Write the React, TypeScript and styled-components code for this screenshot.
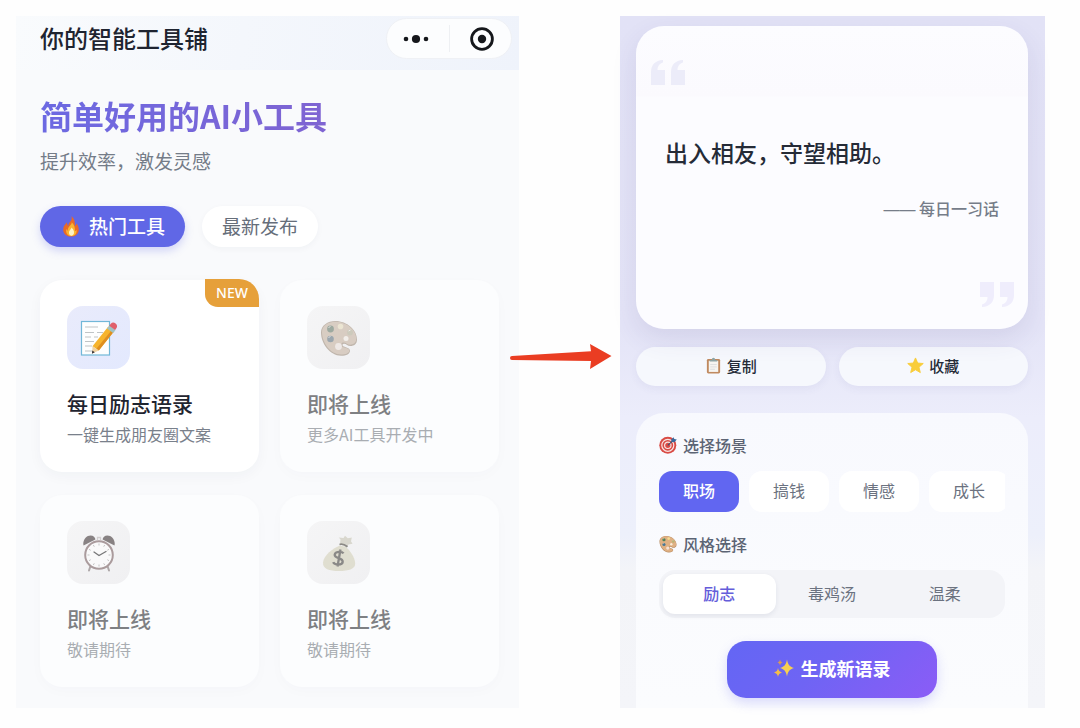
import React from 'react';
import styled, { createGlobalStyle, css } from 'styled-components';

const GlobalStyle = createGlobalStyle`
  *, *::before, *::after { box-sizing: border-box; }
  body {
    margin: 0;
    background: #fefefe;
    color: #1f2430;
    font-family: "Noto Sans CJK SC", "Noto Sans", sans-serif;
  }
  h1, h2, h3, p, blockquote { margin: 0; }
  button { font: inherit; border: 0; padding: 0; cursor: pointer; }
`;

const Page = styled.main`
  display: grid;
  grid-template-columns: minmax(0, 503fr) 101px minmax(0, 425fr);
  padding: 16px 35px 20px 16px;
`;

/* ---------- tool shop screen ---------- */

const ShopScreen = styled.section`
  background: #f9fafc;
`;

const TopBar = styled.header`
  display: flex;
  align-items: flex-start;
  justify-content: space-between;
  height: 54px;
  padding: 2px 7px 0 24px;
  background: linear-gradient(100deg, #f9fbfd 0%, #f4f7fc 45%, #eff3fb 100%);
`;

const TopTitle = styled.h2`
  font-size: 24px;
  line-height: 40px;
  font-weight: 500;
`;

const Capsule = styled.div`
  display: flex;
  align-items: center;
  width: 126px;
  height: 41px;
  border-radius: 21px;
  background: #fcfdfe;
  border: 1px solid #eff1f5;
`;

const CapsuleButton = styled.button`
  flex: 1;
  height: 27px;
  display: flex;
  align-items: center;
  justify-content: center;
  padding-right: 4px;
  background: none;

  & + & {
    padding: 0 0 0 4px;
    border-left: 1px solid #eef0f3;
  }
`;

const ShopBody = styled.div`
  padding: 25px 20px 21px 24px;
`;

const Headline = styled.h1`
  width: fit-content;
  font-size: 32px;
  line-height: 40px;
  font-weight: 700;
  color: transparent;
  background: linear-gradient(90deg, #6c69e2, #7f64d2);
  background-clip: text;
  -webkit-background-clip: text;
`;

const Tagline = styled.p`
  margin-top: 12px;
  font-size: 19px;
  line-height: 28px;
  color: #747c88;
`;

const Tabs = styled.nav`
  display: flex;
  gap: 17px;
  margin: 31px 0 33px;
`;

const Tab = styled.button<{ $active?: boolean }>`
  display: flex;
  align-items: center;
  gap: 7px;
  height: 41px;
  padding: 0 20px 2px;
  border-radius: 21px;
  font-size: 19px;
  line-height: 28px;
  ${({ $active }) =>
    $active
      ? css`
          font-weight: 500;
          color: #fff;
          background: #6067e6;
          box-shadow: 0 4px 8px rgba(96, 103, 230, 0.25);
        `
      : css`
          color: #666e7a;
          background: #fff;
          box-shadow: 0 2px 6px rgba(30, 40, 80, 0.04);
        `}
`;

const ToolGrid = styled.div`
  display: grid;
  grid-template-columns: repeat(2, minmax(0, 1fr));
  gap: 23px 21px;
`;

const ToolIcon = styled.div<{ $muted?: boolean }>`
  display: flex;
  align-items: center;
  justify-content: center;
  width: 63px;
  height: 63px;
  margin-bottom: 19px;
  border-radius: 16px;
  background: ${({ $muted }) =>
    $muted ? 'linear-gradient(135deg, #f5f5f6, #f0f0f2)' : 'linear-gradient(135deg, #e9ebfb, #e3e9fe)'};

  svg { ${({ $muted }) => $muted && 'filter: grayscale(0.6); opacity: 0.6;'} }
`;

const ToolName = styled.h3`
  font-size: 21px;
  line-height: 30px;
  font-weight: 500;
`;

const ToolNote = styled.p`
  margin-top: 4px;
  font-size: 16px;
  line-height: 24px;
  color: #79808b;
`;

const ToolCard = styled.article<{ $muted?: boolean }>`
  position: relative;
  padding: 26px 27px;
  border-radius: 22px;
  background: ${({ $muted }) => ($muted ? '#fcfdfe' : '#ffffff')};
  box-shadow: 0 4px 14px rgba(30, 40, 80, ${({ $muted }) => ($muted ? 0.02 : 0.04)});

  ${({ $muted }) =>
    $muted &&
    css`
      ${ToolName} { color: #7e8083; }
      ${ToolNote} { color: #a9adb2; }
    `}
`;

const NewBadge = styled.span`
  position: absolute;
  top: -1px;
  right: 0;
  width: 54px;
  height: 28px;
  border-radius: 0 20px 0 13px;
  background: #e6a03a;
  color: #fff;
  font-family: "Noto Sans", sans-serif;
  font-size: 14px;
  line-height: 28px;
  font-weight: 500;
  text-align: center;
`;

/* ---------- connector ---------- */

const Connector = styled.div`
  position: relative;

  svg {
    position: absolute;
    top: 326px;
    left: -12px;
    overflow: visible;
  }
`;

/* ---------- quote screen ---------- */

const QuoteScreen = styled.section`
  padding: 10px 17px 0 16px;
  background: linear-gradient(180deg, #e2e2f6 0%, #e4e4f7 45%, #ecedfb 58%, #edf0fb 75%, #f3f4f8 80%, #f4f5f9 100%);
`;

const QuoteCard = styled.blockquote`
  position: relative;
  height: 303px;
  padding: 108px 29px 0;
  border-radius: 28px;
  background: linear-gradient(180deg, #fcfcff 0, #fbfafe 70px, #fcfcff 71px);
  box-shadow: 0 10px 26px rgba(70, 65, 130, 0.11);
`;

const QuoteText = styled.p`
  font-size: 23px;
  line-height: 36px;
  font-weight: 500;
  color: #252b37;
`;

const QuoteAuthor = styled.cite`
  display: block;
  margin-top: 26px;
  font-size: 16px;
  line-height: 24px;
  font-style: normal;
  font-weight: 500;
  text-align: right;
  color: #767d89;
`;

const Dash = styled.span`
  font-family: "Liberation Sans", sans-serif;
  font-weight: 400;
`;

const QuoteMark = styled.svg<{ $closing?: boolean }>`
  position: absolute;
  ${({ $closing }) => ($closing ? 'right: 14px; bottom: 22px; transform: rotate(180deg);' : 'left: 15px; top: 34px;')}
`;

const ActionRow = styled.div`
  display: grid;
  grid-template-columns: 1fr 1fr;
  gap: 13px;
  margin: 18px 0 27px;
`;

const ActionButton = styled.button`
  display: flex;
  align-items: center;
  justify-content: center;
  gap: 5px;
  height: 39px;
  padding-bottom: 2px;
  border-radius: 20px;
  background: #f6f8fd;
  box-shadow: 0 3px 8px rgba(70, 65, 130, 0.06);
  font-size: 15px;
  font-weight: 500;
  color: #252b37;
`;

const ControlCard = styled.section`
  padding: 21px 23px 10px;
  border-radius: 28px 28px 0 0;
  background: linear-gradient(180deg, #f8f9fe, #fafbfe 60%, #fbfcfe);
`;

const SectionLabel = styled.h3`
  display: flex;
  align-items: center;
  gap: 6px;
  margin-bottom: 15px;
  font-size: 16px;
  line-height: 22px;
  font-weight: 500;
  color: #5c6474;
`;

const ChipRow = styled.div`
  display: flex;
  gap: 10px;
  margin-bottom: 21px;
  overflow: hidden;
`;

const Chip = styled.button<{ $active?: boolean }>`
  flex: 0 0 80px;
  height: 41px;
  padding-bottom: 3px;
  border-radius: 13px;
  font-size: 16px;
  font-weight: ${({ $active }) => ($active ? 500 : 400)};
  color: ${({ $active }) => ($active ? '#fff' : '#6b7280')};
  background: ${({ $active }) => ($active ? '#6166f1' : '#fff')};
`;

const Segmented = styled.div`
  display: grid;
  grid-template-columns: repeat(3, 1fr);
  height: 48px;
  padding: 4px;
  border-radius: 16px;
  background: #f3f4f8;
`;

const Segment = styled.button<{ $active?: boolean }>`
  padding-bottom: 3px;
  border-radius: 12px;
  font-size: 16px;
  color: #6b7280;
  background: none;
  ${({ $active }) =>
    $active &&
    css`
      font-weight: 500;
      color: #645dda;
      background: #fff;
      box-shadow: 0 2px 5px rgba(30, 40, 80, 0.08);
    `}
`;

const GenerateButton = styled.button`
  display: flex;
  align-items: center;
  justify-content: center;
  gap: 7px;
  width: 210px;
  height: 57px;
  margin: 23px auto 0;
  padding-bottom: 3px;
  border-radius: 19px;
  background: linear-gradient(135deg, #6366f4 0%, #6f64f4 45%, #8b5cf6 100%);
  box-shadow: 0 5px 12px rgba(99, 102, 241, 0.22);
  font-size: 18px;
  font-weight: 700;
  color: #fff;
`;

/* ---------- drawings ---------- */

type IconProps = { size: number };

const Fire = ({ size }: IconProps) => (
  <svg width={size} height={size} viewBox="0 0 24 24" aria-hidden="true">
    <path d="M12.5 1c1 3.500-.5 5-2 7C9.500 9.500 9 10.500 9 12 8 11 7.500 9.500 7.800 8 5 10.500 3.500 13 3.500 16c0 4.500 3.800 7.500 8.500 7.500s8.500-3 8.500-7.500c0-3-1.300-5.500-2.500-7-.2 1.500-.8 2.500-1.700 3C16.500 7.500 15.500 3.500 12.500 1z" fill="#ea6a26" />
    <path d="M12.800 8c.4 3-4.800 4.800-4.300 9.300-.9-.6-1.400-1.400-1.600-2.300-.9 4 1.100 8 5.100 8s6.800-2.800 6-7c-.5 1-1 1.500-1.700 1.700.4-4-1.100-7.500-3.500-9.700z" fill="#fbb52f" />
    <path d="M12.500 13.500c0 2-2.700 3-2.700 5.700 0 2 1 3.300 2.500 3.300s3.200-1.200 3-4c-.1-2-1.300-3.800-2.800-5z" fill="#fff3c4" />
  </svg>
);

const Memo = ({ size }: IconProps) => (
  <svg width={size} height={size} viewBox="0 0 38 38" aria-hidden="true">
    <rect x="1.500" y="2.500" width="28" height="33.500" fill="#fdfefe" stroke="#71b7d8" strokeWidth="1.200" />
    <path d="M5 8h13M5 13.500h9m3 0h6M5 18h6m3 0h4M5 22.500h9M5 27h7M5 32h9" stroke="#bfc4c6" strokeWidth="1" />
    <path d="M28.300 7.500l6 4.500-15.500 19.500-6.300-4.300z" fill="#f6b42d" />
    <path d="M32.200 10.400l2.100 1.600-15.500 19.500-2.400-1.700z" fill="#df8f20" />
    <path d="M12.500 27.200l6.300 4.300-6.700 3z" fill="#efd2a3" />
    <path d="M12.300 31.600l2.500 1.700-2.900 1.500z" fill="#363438" />
    <path d="M27 9.500l2.400-3 6.100 4.500-2.400 3.100z" fill="#9fc3c4" />
    <path d="M29.200 6.700l1.600-2c1.200-1.500 3.200-1.500 4.800-.3s1.900 3.100.9 4.600l-1.400 2.100z" fill="#e0606b" />
  </svg>
);

const Palette = ({ size }: IconProps) => (
  <svg width={size} height={size} viewBox="0 0 38 38" aria-hidden="true">
    <path d="M1 13.500C1 6.500 7.500 2 15.500 2 27 2 37 11 37 20.500c0 4.500-3 6.500-6.500 6.500-3 0-4-2.300-6.500-2.300-1.500 0-2 1.300-1 2.300 1.500 1.300 7 1.500 7 4.700 0 3-3.500 5-9 5C10 36.700 1 24.500 1 13.500z" fill="#b58a60" />
    <path d="M2 13C2 6.500 8 2.700 15.500 2.700 26.500 2.700 36.300 11 36.300 19.500c0 4.200-2.800 6.200-6 6.200-3 0-4-2.300-6.800-2.300-2.400 0-3 2.600-1.500 4.100 1.500 1.300 7.300 1.300 7.300 4 0 2.500-3.300 4-8.300 4C10.500 35.500 2 23.500 2 13z" fill="#dfb083" />
    <circle cx="10.500" cy="10" r="3.400" fill="#4f8058" />
    <circle cx="20.500" cy="7.500" r="2.800" fill="#f5dc8e" />
    <circle cx="30" cy="13.500" r="2.900" fill="#b9b276" />
    <circle cx="26" cy="19.500" r="2.500" fill="#f9ecd9" />
    <circle cx="10.500" cy="20" r="3.300" fill="#4a7896" />
    <circle cx="18.500" cy="27.500" r="3.400" fill="#f7e1d4" />
    <path d="M8.500 8.500l2-1M8.500 18.500l2-1M28.500 12l2-1" stroke="#fff" strokeWidth="1" opacity=".7" />
  </svg>
);

const AlarmClock = ({ size }: IconProps) => (
  <svg width={size} height={size} viewBox="0 0 38 38" aria-hidden="true">
    <path d="M10.500 32l-1.500 4.500M27.500 32l1.500 4.500" stroke="#8c7375" strokeWidth="2" strokeLinecap="round" />
    <path d="M3.500 11.500C2.300 6 6.500 1.500 10.500 1.500c3 0 4.700 2 4.900 4z" fill="#4d3436" />
    <path d="M34.500 11.500C35.700 6 31.500 1.500 27.500 1.500c-3 0-4.700 2-4.900 4z" fill="#4d3436" />
    <path d="M17.500 6V3.500h3V6" fill="none" stroke="#c4b5b6" strokeWidth="1.300" />
    <circle cx="19" cy="21" r="13.800" fill="#fff" stroke="#985a5e" strokeWidth="2" />
    <path d="M19 9.500v2M19 30.500v2M7.500 21h2M28.500 21h2M13.300 11l1 1.700M24.700 11l-1 1.700M13.300 31l1-1.700M24.700 31l-1-1.700M9 15.300l1.700 1M29 15.300l-1.700 1M9 26.700l1.700-1M29 26.700l-1.700-1" stroke="#a5a5a5" strokeWidth="1" />
    <path d="M14 18l5 3.500 7-4" fill="none" stroke="#27272a" strokeWidth="1.300" strokeLinecap="round" />
  </svg>
);

const MoneyBag = ({ size }: IconProps) => (
  <svg width={size} height={size} viewBox="0 0 38 38" aria-hidden="true">
    <path d="M20 10l.5-4.500L18.800 3.500l4.700.5L25 1.800l2.800 2.500 4-.7-.8 3.600 1.500 2.600-4 .7-2 3z" fill="#cdc79c" />
    <path d="M20 11.500c-7 2.500-16.500 10-17 17-.4 6.500 6 8.500 16 8.500s16.800-2.200 16.200-8c-.7-6.500-5.200-12.500-9.200-16z" fill="#dbd298" />
    <path d="M19.500 10.500c2.500-.8 5 0 8 2.300" fill="none" stroke="#4c4534" strokeWidth="1.800" />
    <path d="M23.500 19.300c-1.500-2.200-8.500-2.200-8.800 1.500-.3 4 8.500 2.700 8 7-.4 3.700-8.200 3.500-9.500.3M20.500 15.500l-3 17" fill="none" stroke="#47443a" strokeWidth="2.300" />
  </svg>
);

const Clipboard = ({ size }: IconProps) => (
  <svg width={size} height={size} viewBox="0 0 18 18" aria-hidden="true">
    <rect x="2" y="2" width="14" height="15.500" rx="1.500" fill="#c08a60" />
    <rect x="4" y="4" width="10" height="11.800" fill="#f6f5f1" />
    <path d="M5.500 8h7M5.500 10.500h7M5.500 13h5" stroke="#d6d8da" strokeWidth=".8" />
    <path d="M5 4.800V3.200h2.200C7.300 1.500 8 .7 9 .7s1.700.8 1.800 2.500H13v1.600z" fill="#8fa5a5" />
  </svg>
);

const Star = ({ size }: IconProps) => (
  <svg width={size} height={size} viewBox="0 0 18 18" aria-hidden="true">
    <path d="M9 1l2.300 5.400 5.900.5-4.500 3.900 1.400 5.700L9 13.500l-5.100 3 1.400-5.700L.8 6.900l5.900-.5z" fill="#f9cd3a" stroke="#f9cd3a" strokeWidth="1" strokeLinejoin="round" />
  </svg>
);

const Target = ({ size }: IconProps) => (
  <svg width={size} height={size} viewBox="0 0 18 18" aria-hidden="true">
    <circle cx="8.800" cy="9.300" r="8.500" fill="#d94b45" />
    <circle cx="8.800" cy="9.300" r="6" fill="none" stroke="#f8e4e2" strokeWidth="1.200" />
    <circle cx="8.800" cy="9.300" r="3.200" fill="none" stroke="#f8e4e2" strokeWidth="1.200" />
    <path d="M8.800 9.300l4.800-4.500" stroke="#33536f" strokeWidth="1.100" />
    <path d="M12.300 5.700V3.400L14.500 1.200l.8 1.800 2.500.5-2.400 2.700z" fill="#39699c" />
  </svg>
);

const Sparkles = ({ size }: IconProps) => (
  <svg width={size} height={size} viewBox="0 0 20 20" aria-hidden="true">
    <path d="M13 1.500c.9 5 2.500 7.200 7 8.500-4.500 1.300-6.100 3.500-7 8.500-.9-5-2.500-7.200-7-8.500 4.500-1.300 6.100-3.500 7-8.500z" fill="#f8cf50" />
    <path d="M4 10c.5 2.600 1.500 3.800 4 4.500-2.500.7-3.500 1.900-4 4.500-.5-2.600-1.500-3.800-4-4.500 2.500-.7 3.500-1.900 4-4.500z" fill="#f5bd4a" />
    <path d="M6 1.500c.3 1.700 1 2.500 2.500 3C7 5 6.300 5.800 6 7.500 5.700 5.800 5 5 3.500 4.500 5 4 5.700 3.200 6 1.500z" fill="#d89a58" />
  </svg>
);

const MarkShape = () => (
  <>
    <path d="M0 12C0 5 4 .5 12 0v2.500C8 4 6.500 6.500 6.500 10H14v15H0z" />
    <path d="M20 12C20 5 24 .5 32 0v2.500C28 4 26.500 6.500 26.500 10H34v15H20z" />
  </>
);

/* ---------- data ---------- */

const tools = [
  { name: '每日励志语录', note: '一键生成朋友圈文案', Icon: Memo, live: true },
  { name: '即将上线', note: '更多AI工具开发中', Icon: Palette, live: false },
  { name: '即将上线', note: '敬请期待', Icon: AlarmClock, live: false },
  { name: '即将上线', note: '敬请期待', Icon: MoneyBag, live: false },
];

const scenes = ['职场', '搞钱', '情感', '成长'];
const tones = ['励志', '毒鸡汤', '温柔'];

export default function App() {
  const [scene, setScene] = React.useState(scenes[0]);
  const [tone, setTone] = React.useState(tones[0]);

  return (
    <>
      <GlobalStyle />
      <Page>
        <ShopScreen>
          <TopBar>
            <TopTitle>你的智能工具铺</TopTitle>
            <Capsule>
              <CapsuleButton aria-label="更多">
                <svg width="26" height="10" viewBox="0 0 26 10">
                  <g fill="#15171b">
                    <circle cx="3" cy="5" r="2.300" />
                    <circle cx="13" cy="5" r="4.100" />
                    <circle cx="23" cy="5" r="2.300" />
                  </g>
                </svg>
              </CapsuleButton>
              <CapsuleButton aria-label="关闭">
                <svg width="24" height="24" viewBox="0 0 24 24">
                  <circle cx="12" cy="12" r="10.400" fill="none" stroke="#15171b" strokeWidth="2.800" />
                  <circle cx="12" cy="12" r="4.200" fill="#15171b" />
                </svg>
              </CapsuleButton>
            </Capsule>
          </TopBar>
          <ShopBody>
            <Headline>简单好用的AI小工具</Headline>
            <Tagline>提升效率，激发灵感</Tagline>
            <Tabs>
              <Tab $active>
                <Fire size={22} />
                热门工具
              </Tab>
              <Tab>最新发布</Tab>
            </Tabs>
            <ToolGrid>
              {tools.map(({ name, note, Icon, live }, i) => (
                <ToolCard key={i} $muted={!live}>
                  {live && <NewBadge>NEW</NewBadge>}
                  <ToolIcon $muted={!live}>
                    <Icon size={38} />
                  </ToolIcon>
                  <ToolName>{name}</ToolName>
                  <ToolNote>{note}</ToolNote>
                </ToolCard>
              ))}
            </ToolGrid>
          </ShopBody>
        </ShopScreen>

        <Connector>
          <svg width="105" height="28" viewBox="0 0 105 28" aria-hidden="true">
            <path d="M5 14L84 9.300 83 2l21.500 12L83 27l1-8L5 18a2 2 0 0 1 0-4z" fill="#ea3d22" />
          </svg>
        </Connector>

        <QuoteScreen>
          <QuoteCard>
            <QuoteMark width="34" height="25" viewBox="0 0 34 25" fill="#ececf9" aria-hidden="true">
              <MarkShape />
            </QuoteMark>
            <QuoteText>出入相友，守望相助。</QuoteText>
            <QuoteAuthor>
              <Dash>——</Dash> 每日一习话
            </QuoteAuthor>
            <QuoteMark $closing width="34" height="25" viewBox="0 0 34 25" fill="#efedfc" aria-hidden="true">
              <MarkShape />
            </QuoteMark>
          </QuoteCard>
          <ActionRow>
            <ActionButton>
              <Clipboard size={17} />
              复制
            </ActionButton>
            <ActionButton>
              <Star size={17} />
              收藏
            </ActionButton>
          </ActionRow>
          <ControlCard>
            <SectionLabel>
              <Target size={18} />
              选择场景
            </SectionLabel>
            <ChipRow>
              {scenes.map((s) => (
                <Chip key={s} $active={s === scene} aria-pressed={s === scene} onClick={() => setScene(s)}>
                  {s}
                </Chip>
              ))}
            </ChipRow>
            <SectionLabel>
              <Palette size={18} />
              风格选择
            </SectionLabel>
            <Segmented>
              {tones.map((t) => (
                <Segment key={t} $active={t === tone} aria-pressed={t === tone} onClick={() => setTone(t)}>
                  {t}
                </Segment>
              ))}
            </Segmented>
            <GenerateButton>
              <Sparkles size={20} />
              生成新语录
            </GenerateButton>
          </ControlCard>
        </QuoteScreen>
      </Page>
    </>
  );
}
